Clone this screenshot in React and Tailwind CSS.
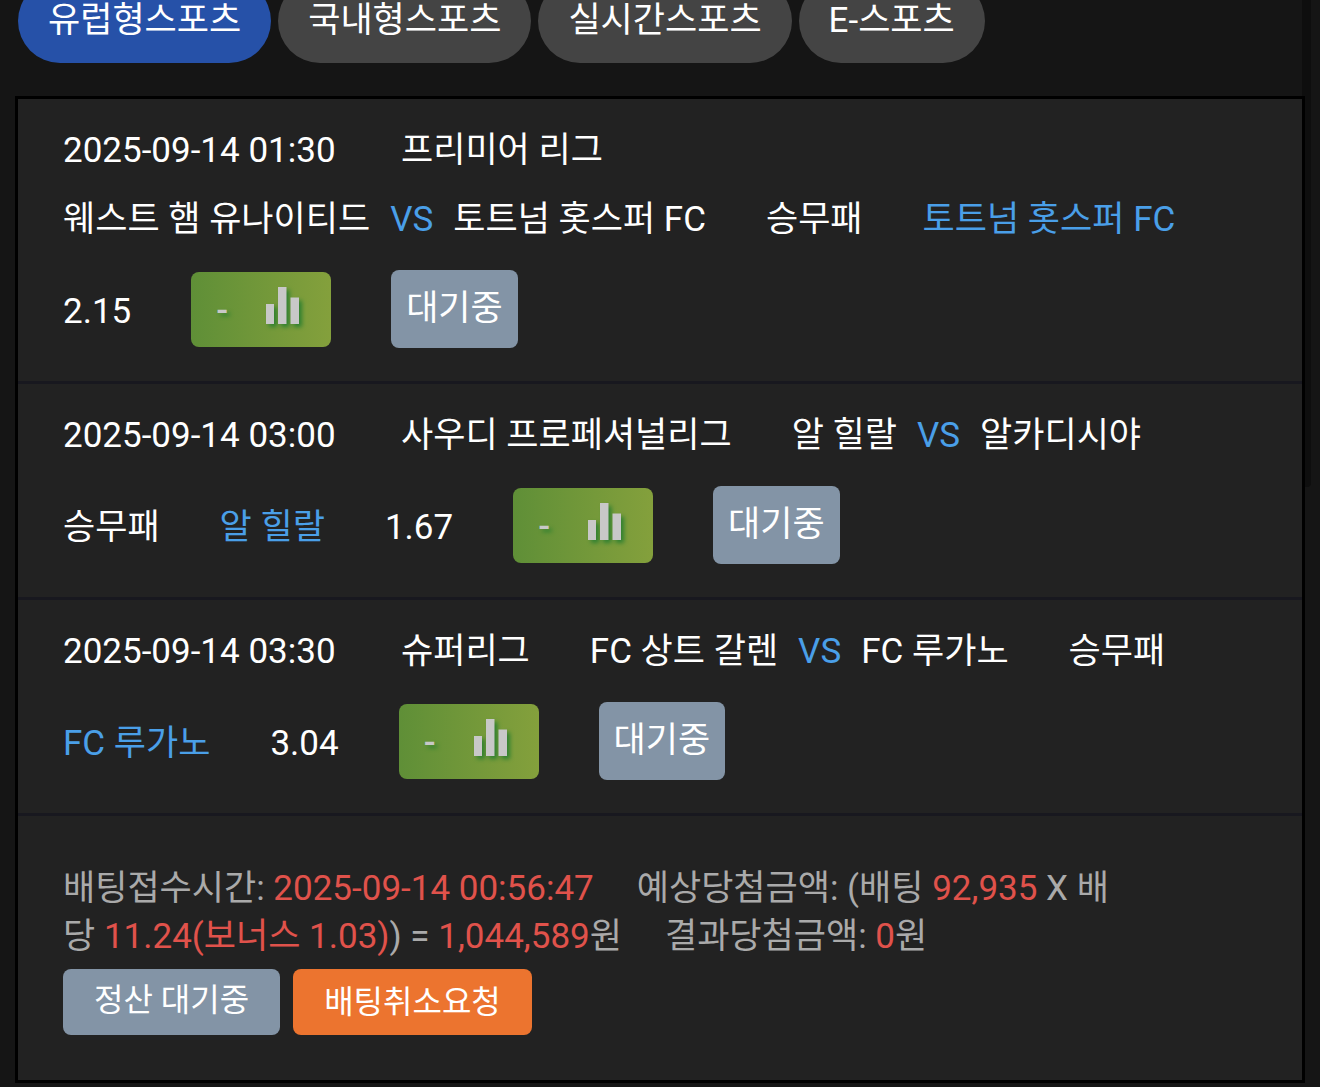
import React from 'react';

// Sport category tabs
const tabs = [
  { name: '유럽형스포츠', active: true },
  { name: '국내형스포츠', active: false },
  { name: '실시간스포츠', active: false },
  { name: 'E-스포츠', active: false }
];

const bets = [
  {
    id: 1,
    date: '2025-09-14 01:30',
    league: '프리미어 리그',
    home: '웨스트 햄 유나이티드',
    away: '토트넘 홋스퍼 FC',
    market: '승무패',
    pick: '토트넘 홋스퍼 FC',
    odds: '2.15',
    status: '대기중'
  },
  {
    id: 2,
    date: '2025-09-14 03:00',
    league: '사우디 프로페셔널리그',
    home: '알 힐랄',
    away: '알카디시야',
    market: '승무패',
    pick: '알 힐랄',
    odds: '1.67',
    status: '대기중'
  },
  {
    id: 3,
    date: '2025-09-14 03:30',
    league: '슈퍼리그',
    home: 'FC 상트 갈렌',
    away: 'FC 루가노',
    market: '승무패',
    pick: 'FC 루가노',
    odds: '3.04',
    status: '대기중'
  }
];

const App = () => {
  return (
    <div className="relative min-h-screen overflow-hidden bg-[#151515] font-['Roboto','Noto_Sans_CJK_KR',sans-serif] text-[35px] leading-[48px] text-white">
      {/* Scroll thumb */}
      <div className="absolute right-[9px] top-0 h-[487px] w-[9px] rounded-b bg-[#0e0e0e]" />

      {/* Tabs */}
      <nav className="-mt-[21px] flex flex-wrap gap-[7px] px-[18px]">
        {tabs.map((tab) => (
          <button
            key={tab.name}
            type="button"
            className={`h-[84px] rounded-full px-[30px] ${tab.active ? 'bg-[#2651a8]' : 'bg-[#444444]'}`}
          >
            {tab.name}
          </button>
        ))}
      </nav>

      {/* Bet slip */}
      <main className="relative mx-[15px] mt-[33px] mb-1 border-[3px] border-black bg-[#222222]">
        {bets.map((bet) => (
          <BetRow key={bet.id} bet={bet} />
        ))}

        <section className="px-[45px] pt-[49px] pb-[45px] text-[#aaaaaa]">
          <p>
            배팅접수시간: <Red>2025-09-14 00:56:47</Red>
            <span className="ml-[43px]">예상당첨금액:</span> (배팅 <Red>92,935</Red> X 배당&nbsp;
            <Red>11.24(보너스 1.03)</Red>) = <Red>1,044,589</Red>원
            <span className="ml-[43px]">결과당첨금액:</span> <Red>0</Red>원
          </p>
          <div className="mt-2 flex flex-wrap gap-[13px] text-[32px] text-white">
            <span className="h-[66px] rounded-lg bg-[#8394a6] px-[31px] pt-[7px]">정산 대기중</span>
            <button type="button" className="h-[66px] rounded-lg bg-[#ec742f] px-[31px]">
              배팅취소요청
            </button>
          </div>
        </section>
      </main>
    </div>
  );
};

/* ---------------------------
   Small UI helper components
   --------------------------- */

const BetRow = ({ bet }) => {
  return (
    <section className="flex flex-wrap items-center gap-x-[60px] border-b-[3px] border-[#18181f] px-[45px] py-[15px]">
      <span className="min-w-[278px] pt-[13px] pb-2">{bet.date}</span>
      <span className="pt-[13px] pb-2">{bet.league}</span>
      <span className="pt-[13px] pb-2">
        {bet.home}
        <span className="mx-5 text-[#4a9fe8]">VS</span>
        {bet.away}
      </span>
      <span className="pt-[13px] pb-2">{bet.market}</span>
      <span className="pt-[13px] pb-2 text-[#4a9fe8]">{bet.pick}</span>
      <span className="pt-[13px] pb-2">{bet.odds}</span>
      <button
        type="button"
        aria-label="통계"
        className="flex h-[75px] items-center gap-[38px] rounded-lg bg-linear-to-r from-[#5f8f37] to-[#84a03c] pl-[25px] pr-8 text-[#c8c8c8] text-shadow-[3px_3px_4px_#2f8030]"
      >
        <span className="pt-1 font-medium">-</span>
        <BarsIcon />
      </button>
      <span className="my-[18px] h-[78px] rounded-lg bg-[#8394a6] px-[15px] pt-[15px]">{bet.status}</span>
    </section>
  );
};

const BarsIcon = () => {
  return (
    <svg className="mb-2 h-[37px] w-[33px] overflow-visible drop-shadow-[3px_3px_2px_#2f8030]" viewBox="0 0 33 37" fill="currentColor">
      <rect x="0" y="17" width="8" height="20" />
      <rect x="12" y="0" width="8.5" height="37" />
      <rect x="24.5" y="10.5" width="8.5" height="26.5" />
    </svg>
  );
};

const Red = ({ children }) => <span className="text-[#e0524b]">{children}</span>;

export default App;
